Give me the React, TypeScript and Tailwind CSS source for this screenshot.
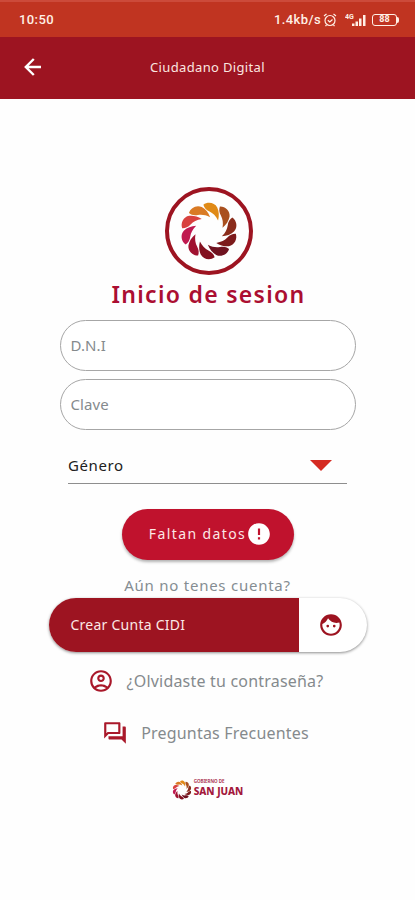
import { MdError, MdFace, MdOutlineAccountCircle, MdOutlineForum } from "react-icons/md";

const petalColors = [
    "#e08a16",
    "#a9501f",
    "#8a2c1b",
    "#7c1a1b",
    "#6f1220",
    "#83101f",
    "#a01230",
    "#c01a50",
    "#d8413f",
    "#d97a24",
];

function Swirl({ className }: { className?: string }) {
    return (
        <svg viewBox="-30 -30 60 60" className={className}>
            {petalColors.map((color, i) => (
                <path
                    key={color}
                    d="M-7 -26 C-3 -29.500 4 -29 7 -24 C9 -20 9.500 -16 8.500 -11 C6 -15.500 3 -18 -0.500 -19.500 C-4 -21 -6 -23 -7 -26Z"
                    fill={color}
                    transform={`rotate(${3 + (i * 360) / petalColors.length})`}
                />
            ))}
        </svg>
    );
}

function StatusBar() {
    return (
        <div className="flex h-[37px] items-center justify-between border-t-2 border-[#cc4a3a] bg-[#c03421] pr-[16px] pl-[19px] text-[#fff0e6]">
            <span className="font-[Roboto] text-[13px] font-medium tracking-[0.4px]">10:50</span>
            <div className="flex items-center">
                <span className="font-[Roboto] text-[13px] font-medium tracking-[0.4px]">1.4kb/s</span>
                <svg viewBox="0 0 14 14" className="ml-[2px] size-[14px]" fill="none" stroke="currentColor" strokeWidth="1.2">
                    <circle cx="7" cy="7.5" r="5" />
                    <path d="M1 3 L3.5 1 M13 3 L10.5 1 M4.8 7.2 L6.8 9 L9.5 6.5 M3.5 12 L2.5 13.2 M10.5 12 L11.5 13.2" />
                </svg>
                <svg viewBox="0 0 22 14" className="ml-[8px] h-[14px] w-[22px]" fill="currentColor">
                    <text x="0" y="6" fontSize="7" fontWeight="700" fontFamily="Roboto">4G</text>
                    <path d="M7 10.500h2.500v2.500H7z M10.500 8.500h2.500v4.500h-2.500z M14 5.500h2.500V13h-2.500z M18 2h2.500v11H18z" />
                </svg>
                <div className="ml-[5px] flex h-[12px] w-[25px] items-center justify-center rounded-[3px] border border-current font-[Roboto] text-[9px] leading-none font-bold">
                    88
                </div>
                <div className="h-[6px] w-[2px] rounded-r-sm bg-current" />
            </div>
        </div>
    );
}

function Field({ placeholder }: { placeholder: string }) {
    return (
        <input
            placeholder={placeholder}
            className="block h-[51px] w-[296px] rounded-full border border-[#a6a6a6] bg-white px-[10px] pb-[1px] text-[15px] tracking-[0.1px] outline-none placeholder:text-[#858a8d]"
        />
    );
}

export default function App() {
    return (
        <div className="h-[900px] w-full overflow-hidden bg-[#fefefe] font-['Noto_Sans',sans-serif]">
            <StatusBar />
            <header className="grid h-[62px] grid-cols-[66px_1fr_66px] items-center bg-[#9d1421] text-[#fbe6e0]">
                <svg viewBox="0 0 24 24" className="mb-[2px] ml-[21px] size-[24px] text-white" fill="none" stroke="currentColor" strokeWidth="2.4">
                    <path d="M20 12H5.500 M12.800 4 L4.800 12 L12.800 20" />
                </svg>
                <h1 className="text-center text-[13px] tracking-[0.35px]">Ciudadano Digital</h1>
            </header>

            <main className="flex flex-col items-center">
                <div className="mt-[88px] ml-[2px] flex size-[88px] items-center justify-center rounded-full border-4 border-[#9d1421]">
                    <Swirl className="size-[60px]" />
                </div>
                <h2 className="mt-[3px] h-[32px] pl-[2px] text-[23px] leading-[32px] font-semibold tracking-[1.3px] whitespace-nowrap text-[#ab0e32]">
                    Inicio de sesion
                </h2>

                <div className="mt-[10px] flex flex-col gap-[8px]">
                    <Field placeholder="D.N.I" />
                    <Field placeholder="Clave" />
                </div>

                <button className="mt-[18px] flex h-[36px] w-[279px] items-center justify-between border-b border-[#8e8e8e] pr-[15px] text-[15px] tracking-[0.6px] text-[#202020]">
                    Género
                    <svg viewBox="0 0 22 11" className="h-[11px] w-[22px]">
                        <path d="M0 0h22L11 11z" fill="#d52b22" />
                    </svg>
                </button>

                <button className="mt-[25px] flex h-[51px] w-[172px] items-center justify-center rounded-full bg-[#c0122d] pb-[2px] pl-[6px] text-[14px] tracking-[1.4px] whitespace-nowrap text-[#fce8e6] shadow-[0_2px_3px_rgba(0,0,0,0.3)]">
                    Faltan datos
                    <MdError className="size-[26px] text-white" />
                </button>

                <p className="mt-[13px] mb-[1px] h-[24px] text-[15px] leading-[24px] tracking-[0.75px] text-[#858d92]">Aún no tenes cuenta?</p>

                <button className="flex h-[54px] w-[318px] overflow-hidden rounded-full bg-white text-[14px] tracking-[0.25px] shadow-[0_1px_3px_rgba(0,0,0,0.45)]">
                    <span className="flex h-full w-[250px] items-center bg-[#9d1421] pb-[2px] pl-[22px] text-[#fce8e6]">Crear Cunta CIDI</span>
                    <span className="flex h-full flex-1 items-center justify-center pr-[4px]">
                        <MdFace className="size-[26px] text-[#9d1421]" />
                    </span>
                </button>

                <a className="mt-[16px] mr-[4px] flex h-[26px] items-center gap-[13px] text-[16px] tracking-[0.2px] whitespace-nowrap text-[#858a8d]">
                    <MdOutlineAccountCircle className="size-[26px] text-[#a9182a]" />
                    ¿Olvidaste tu contraseña?
                </a>
                <a className="mt-[26px] mr-[4px] flex h-[26px] items-center gap-[13px] text-[16px] tracking-[0.2px] whitespace-nowrap text-[#858a8d]">
                    <MdOutlineForum className="size-[26px] text-[#a9182a]" />
                    Preguntas Frecuentes
                </a>

                <div className="mt-[32px] flex items-center gap-[2px] text-[#a3183c]">
                    <Swirl className="size-[20px]" />
                    <div className="mb-[3px] flex flex-col">
                        <span className="text-[4.5px] leading-[6px] font-semibold">GOBIERNO DE</span>
                        <span className="text-[10px] leading-[14px] font-extrabold whitespace-nowrap">SAN JUAN</span>
                    </div>
                </div>
            </main>
        </div>
    );
}
